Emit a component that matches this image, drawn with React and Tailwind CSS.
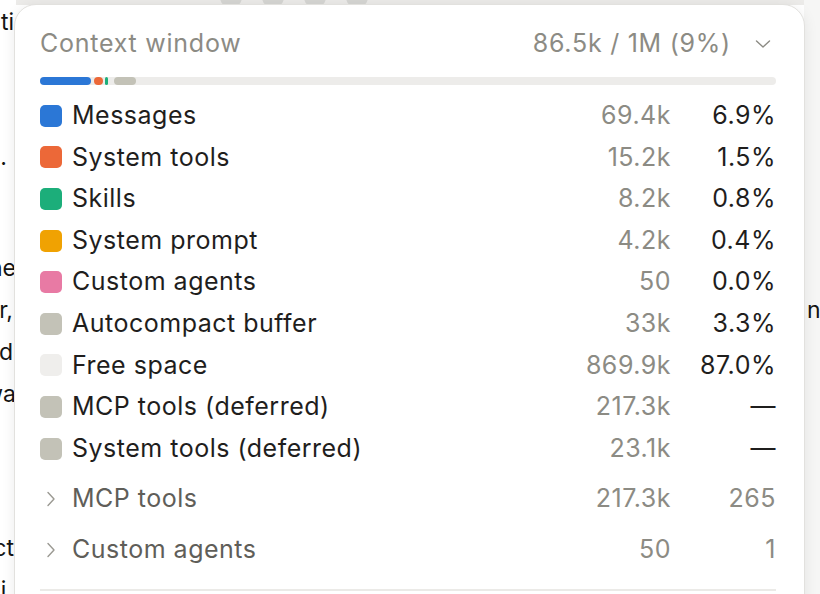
import React from 'react';

const rows = [
    { label: 'Messages', color: 'bg-[#2b77d6]', value: '69.4k', pct: '6.9%' },
    { label: 'System tools', color: 'bg-[#ec6838]', value: '15.2k', pct: '1.5%' },
    { label: 'Skills', color: 'bg-[#1cae7a]', value: '8.2k', pct: '0.8%' },
    { label: 'System prompt', color: 'bg-[#f0a202]', value: '4.2k', pct: '0.4%' },
    { label: 'Custom agents', color: 'bg-[#e87aa4]', value: '50', pct: '0.0%' },
    { label: 'Autocompact buffer', color: 'bg-[#c3c2b7]', value: '33k', pct: '3.3%' },
    { label: 'Free space', color: 'bg-[#efeeec]', value: '869.9k', pct: '87.0%' },
    { label: 'MCP tools (deferred)', color: 'bg-[#c3c2b7]', value: '217.3k', pct: '—' },
    { label: 'System tools (deferred)', color: 'bg-[#c3c2b7]', value: '23.1k', pct: '—' },
];

const groups = [
    { label: 'MCP tools', value: '217.3k', count: '265' },
    { label: 'Custom agents', value: '50', count: '1' },
];

// bits of the page text that peek out on the left, behind the popover
const behindLeft = [
    { text: 'in the configurati', cls: 'mt-[1px] mr-[2px]' },
    { text: 'each time.', cls: 'mt-[93px] mr-[9px]' },
    { text: 'the', cls: 'mt-[69px] mr-0' },
    { text: 'cleaner,', cls: 'mt-0 mr-[3px]' },
    { text: 'and', cls: 'mt-0 mr-[3px]' },
    { text: 'forwa', cls: 'mt-0 mr-0' },
    { text: 'fact', cls: 'mt-[112px] mr-[2px]' },
    { text: 'i,', cls: 'mt-0 mr-[3px]' },
];

const ChevronDown = () => (
    <svg width="16" height="10" viewBox="0 0 16 10" fill="none" className="text-[#8c8b84]">
        <path d="M1.5 2 L8 8 L14.5 2" stroke="currentColor" strokeWidth="1.4" strokeLinecap="round" strokeLinejoin="round" />
    </svg>
);

const ChevronRight = () => (
    <svg width="10" height="16" viewBox="0 0 10 16" fill="none" className="text-[#9a9992]">
        <path d="M2 1.5 L8 8 L2 14.5" stroke="currentColor" strokeWidth="1.4" strokeLinecap="round" strokeLinejoin="round" />
    </svg>
);

const ContextPopover = () => {
    return (
        <div className="absolute left-[14px] top-[4px] w-[791px] h-[660px] rounded-[22px] border border-[#e2e1de] bg-white shadow-[0_2px_14px_rgba(0,0,0,0.08)]">
            <div className="pl-[25px] pr-[28px] pt-[24px] text-[25px] tracking-[0.02em]">
                <div className="flex h-[30px] items-center justify-between">
                    <span className="tracking-[0.03em] text-[#8c8b84]">Context window</span>
                    <div className="flex items-center">
                        <span className="tracking-[0.03em] text-[#8c8b84]">86.5k / 1M (9%)</span>
                        <span className="ml-[24px] mr-[5px] flex items-center"><ChevronDown /></span>
                    </div>
                </div>

                <div className="mt-[18px] flex h-[8px] w-full items-center rounded-full bg-[#edecea]">
                    <div className="h-full w-[51px] rounded-full bg-[#2b77d6]" />
                    <div className="ml-[3px] h-full w-[9px] rounded-full bg-[#ec6838]" />
                    <div className="ml-[2px] h-full w-[3px] rounded-full bg-[#1cae7a]" />
                    <div className="ml-[6px] h-full w-[22px] rounded-full bg-[#c3c2b7]" />
                </div>

                <div className="mt-[10px] flex flex-col">
                    {rows.map((row) => (
                        <div key={row.label} className="flex h-[41.6px] items-center">
                            <div className={`h-[22px] w-[22px] rounded-[5px] ${row.color}`} />
                            <span className="ml-[10px] flex-1 text-[#1f1e1d]">{row.label}</span>
                            <span className="w-[140px] text-right text-[#8c8b84]">{row.value}</span>
                            <span className="w-[105px] text-right text-[#1f1e1d]">{row.pct}</span>
                        </div>
                    ))}
                </div>

                <div className="mt-[4px] flex flex-col">
                    {groups.map((group) => (
                        <div key={group.label} className="flex h-[51px] items-center">
                            <span className="ml-[6px] flex w-[16px] items-center"><ChevronRight /></span>
                            <span className="ml-[10px] flex-1 text-[#5f5e59]">{group.label}</span>
                            <span className="w-[140px] text-right text-[#8c8b84]">{group.value}</span>
                            <span className="w-[105px] text-right text-[#8c8b84]">{group.count}</span>
                        </div>
                    ))}
                </div>

                <div className="mt-[14px] h-[2px] w-full bg-[#ebeae7]" />
            </div>
        </div>
    );
};

const App = () => {
    return (
        <div className="relative h-[594px] w-[820px] overflow-hidden bg-white font-['Inter',sans-serif]">
            {/* page underneath the popover */}
            <div className="flex h-full">
                <div className="flex w-[16px] flex-col items-end text-[23px] leading-[42px] text-[#141413]">
                    {behindLeft.map((line, i) => (
                        <div key={i} className={`flex justify-end whitespace-nowrap ${line.cls}`}>{line.text}</div>
                    ))}
                </div>
                <div className="flex flex-1 flex-col">
                    <div className="h-[5px] w-full bg-[#ecebe9]" />
                    <div className="-mt-[19px] flex gap-[20px] pl-[204px]">
                        {[0, 1, 2, 3].map((i) => (
                            <div key={i} className="h-[22px] w-[22px] rounded-full bg-[#d6d6d3]" />
                        ))}
                    </div>
                </div>
                <div className="w-[16px] bg-[#f6f6f5] pt-[289px] pl-[3px] text-[23px] leading-[42px] text-[#141413]">
                    <div className="flex whitespace-nowrap">n the</div>
                </div>
            </div>

            <ContextPopover />
        </div>
    );
};

export default App;
